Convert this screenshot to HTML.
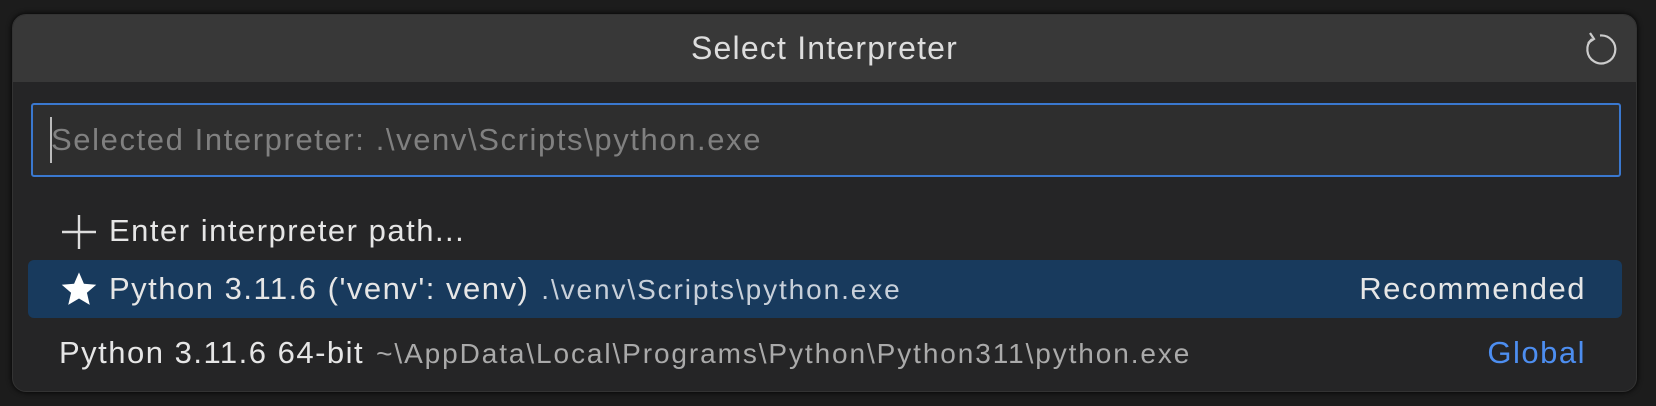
<!DOCTYPE html>
<html><head><style>
html,body{margin:0;padding:0;width:1656px;height:406px;overflow:hidden;background:#1c1c1c;font-family:"Segoe UI","Liberation Sans",sans-serif;}
.p{position:absolute;left:12px;top:14px;width:1625px;height:378px;background:#252526;border-radius:14px;box-shadow:0 0 6px #000;overflow:hidden;border:1px solid #333;box-sizing:border-box}
.h{position:absolute;left:0;top:0;width:100%;height:67px;background:#383838;color:#ddd;font-size:32px;letter-spacing:1.2px;text-align:center;line-height:67px}
.in{position:absolute;left:18px;top:88px;width:1590px;height:74px;box-sizing:border-box;border:2px solid #3a78cf;border-radius:3px;background:#2e2e2e;color:#808080;font-size:31px;letter-spacing:1.6px;line-height:70px;padding-left:18px;white-space:nowrap}
.cur{position:absolute;left:17px;top:12px;width:2px;height:46px;background:#bbb}
.r{position:absolute;left:15px;width:1594px;height:58px;color:#e6e6e6;font-size:31px;letter-spacing:1.5px;line-height:58px;border-radius:6px;white-space:nowrap}
.s{font-size:28px;letter-spacing:1.9px;color:#aaa;margin-left:12px}
.sel{background:#183a5d}
.sel .s{color:#c8d0da}
.rt{position:absolute;right:36px;top:0}
</style></head><body>
<div class="p">
<div class="h">Select Interpreter
<svg style="position:absolute;right:18px;top:16px" width="36" height="36" viewBox="0 0 36 36" fill="none" stroke="#ccc" stroke-width="2.2"><path d="M10 8 A14 14 0 1 0 18 4.5"/><path d="M8 2 L12 8 L6 12"/></svg>
</div>
<div class="in"><div class="cur"></div>Selected Interpreter: .\venv\Scripts\python.exe</div>
<div class="r" style="top:187px"><svg style="position:absolute;left:33px;top:12px" width="36" height="36" viewBox="0 0 36 36" stroke="#ddd" stroke-width="2.4"><path d="M18 1V35M1 18H35"/></svg><span style="margin-left:81px">Enter interpreter path...</span></div>
<div class="r sel" style="top:245px"><svg style="position:absolute;left:32px;top:10px" width="38" height="38" viewBox="0 0 24 24" fill="#fff"><path d="M12 1.5l3.1 7.2 7.8.6-5.9 5.1 1.8 7.6L12 18l-6.8 4 1.8-7.6-5.9-5.1 7.8-.6z"/></svg><span style="margin-left:81px">Python 3.11.6 ('venv': venv)</span><span class="s">.\venv\Scripts\python.exe</span><span class="rt">Recommended</span></div>
<div class="r" style="top:309px"><span style="margin-left:31px">Python 3.11.6 64-bit</span><span class="s">~\AppData\Local\Programs\Python\Python311\python.exe</span><span class="rt" style="color:#4d8ef0">Global</span></div>
</div>
</body></html>
